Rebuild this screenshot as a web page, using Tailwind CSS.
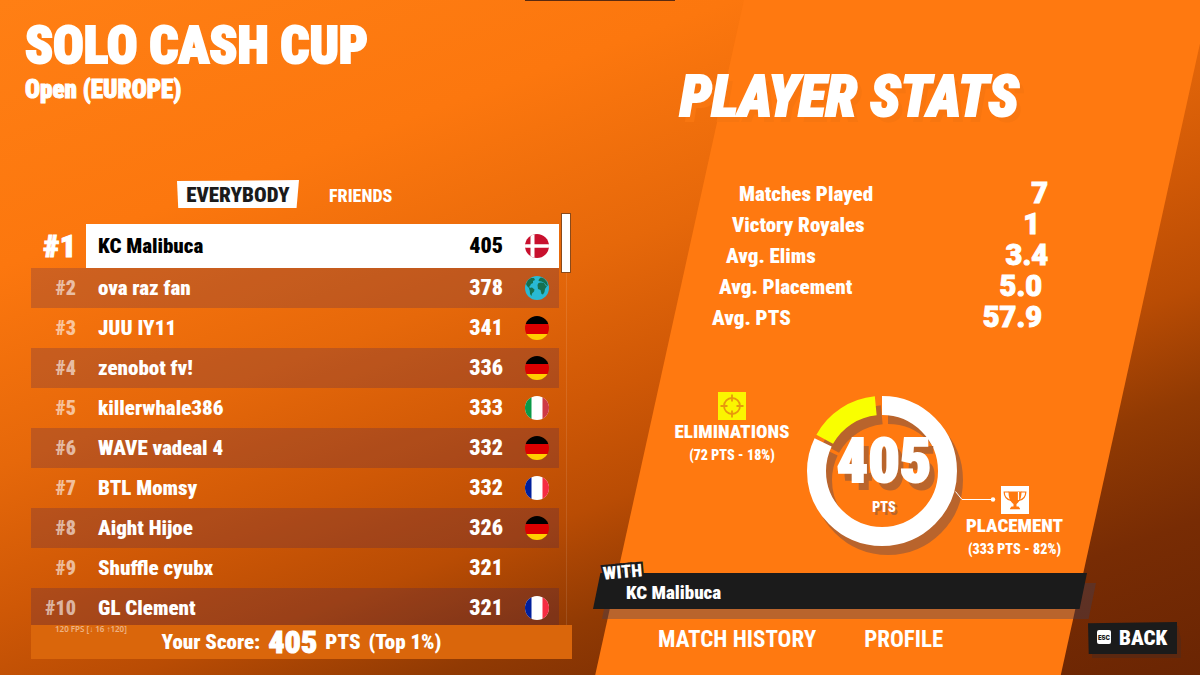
<!DOCTYPE html>
<html lang="en">
<head>
  <meta charset="UTF-8" />
  <meta name="viewport" content="width=device-width, initial-scale=1.0" />
  <title>Solo Cash Cup</title>
  <script src="https://cdn.jsdelivr.net/npm/@tailwindcss/browser@4"></script>
  <style>
    body { font-family: 'Roboto Condensed', Roboto, sans-serif; }
  </style>
</head>
<body class="relative flex h-screen overflow-hidden font-black text-white bg-[linear-gradient(160deg,#ff7f14_0%,#fc770e_24%,#e6680a_42%,#cf5806_55%,#b94c04_65%,#913a03_75%,#782c04_86%,#6a2503_100%)]">

  <!-- slanted stats panel -->
  <div class="absolute inset-0 bg-[#ff7910] [clip-path:polygon(62%_0,100.8%_0,88.4%_100%,49.6%_100%)]"></div>
  <div class="absolute top-0 left-[525px] h-px w-[150px] bg-[#5a2a10]"></div>

  <!-- leaderboard -->
  <main class="relative flex w-[48%] flex-col pt-5 pr-1 pb-4 pl-[31px]">
    <header class="-ml-[6px]">
      <h1 class="text-[51px] leading-[51px] [-webkit-text-stroke:2px_#fff]">SOLO CASH CUP</h1>
      <p class="mt-1 text-[25px] leading-[30px] [-webkit-text-stroke:1px_#fff]">Open (EUROPE)</p>
    </header>

    <nav class="mt-[75px] flex h-7 items-stretch pl-[146px]">
      <button class="w-[122px] bg-white pt-[2px] text-[21px] leading-6 text-[#1b1b1b] [clip-path:polygon(0_4%,100%_0,98%_100%,1%_100%)]">EVERYBODY</button>
      <button class="ml-[30px] pt-[2px] text-[18px] font-extrabold">FRIENDS</button>
    </nav>

    <div class="mt-[5px] flex min-h-0 flex-1 gap-[2px] overflow-hidden">
      <div class="flex-1 pt-[11px]">
        <table class="w-full table-fixed text-[21px] leading-6">
          <tbody id="rows"></tbody>
        </table>
      </div>
      <div class="w-[11px] bg-[linear-gradient(90deg,transparent_5px,#ffffff1a_5px,#ffffff1a_6px,transparent_6px)]">
        <div class="h-[60px] w-[10px] border border-[#8a4a1a] bg-white"></div>
      </div>
    </div>

    <footer class="relative flex h-[34px] shrink-0 items-center justify-center gap-2 bg-[#da660b] text-[21px] leading-[34px]">
      <span>Your Score:</span>
      <strong class="text-[32px] font-black [-webkit-text-stroke:1px_#fff]">405</strong>
      <span>PTS</span>
      <span>(Top 1%)</span>
      <small class="absolute -top-[2px] left-6 font-['Noto_Sans'] text-[8px] leading-[12px] font-semibold text-white/50">120 FPS [↓ 16 ↑120]</small>
    </footer>
  </main>

  <!-- player stats -->
  <section class="relative flex flex-1 flex-col pt-[67px]">
    <h2 class="ml-[104px] text-[57px] leading-[60px] italic [-webkit-text-stroke:2px_#fff] [text-shadow:5px_6px_0_#f87610]">PLAYER STATS</h2>

    <dl id="stats" class="mt-[52px] ml-[136px] w-[336px] text-[21px]"></dl>

    <div class="mt-[58px] ml-[99px] flex items-start">
      <div class="flex w-[114px] flex-col items-center">
        <svg class="h-7 w-7" viewBox="0 0 28 28" fill="none" stroke="#e8980c" stroke-width="1.8">
          <rect width="28" height="28" fill="#fbf500" stroke="none" />
          <circle cx="14" cy="14" r="8" />
          <path d="M14 2.500v7M14 18.500v7M2.500 14h7M18.500 14h7" />
        </svg>
        <h3 class="text-[19px] leading-6">ELIMINATIONS</h3>
        <p class="text-[14px] leading-[22px] whitespace-nowrap">(72 PTS - 18%)</p>
      </div>

      <div class="relative mt-1 ml-[18px] h-[150px] w-[150px]">
        <svg class="h-full w-full overflow-visible" viewBox="0 0 150 150" fill="none">
          <g transform="translate(6 9)" stroke="#363e61" stroke-opacity=".35" stroke-width="19">
            <circle cx="75" cy="75" r="65.5" pathLength="360" stroke-dasharray="296 64" transform="rotate(-90 75 75)" />
            <circle cx="75" cy="75" r="65.5" pathLength="360" stroke-dasharray="55.5 304.5" transform="rotate(209 75 75)" />
          </g>
          <g stroke-width="19">
            <circle cx="75" cy="75" r="65.5" pathLength="360" stroke="#fff" stroke-dasharray="296 64" transform="rotate(-90 75 75)" />
            <circle cx="75" cy="75" r="65.5" pathLength="360" stroke="#f9ff00" stroke-dasharray="55.5 304.5" transform="rotate(209 75 75)" />
          </g>
          <path d="M148.500 95.500l6.500 8h30" stroke="#fff" />
          <circle cx="186" cy="103.500" r="2.200" fill="#fff" />
        </svg>
        <div class="absolute inset-0 flex flex-col items-center pt-[35px] pl-1 [text-shadow:6px_8px_0_#b9652c]">
          <strong class="text-[62px] leading-[60px] font-black [-webkit-text-stroke:2px_#fff]">405</strong>
          <span class="mt-[6px] text-[14px] leading-5 [text-shadow:2px_3px_0_#b9652c]">PTS</span>
        </div>
      </div>

      <div class="mt-[94px] ml-[9px] flex w-[97px] flex-col items-center">
        <svg class="h-7 w-7" viewBox="0 0 28 28">
          <rect width="28" height="28" fill="#fff" />
          <path fill="#ff7910" d="M7.500 5.500h13c0 6-1.500 10-5 12.500v2.500h2l1.500 2v.800h-10v-.800l1.500-2h2V18c-3.500-2.500-5-6.500-5-12.500z" />
          <path fill="none" stroke="#ff7910" stroke-width="1.200" d="M8 6H3.200c0 4 2.500 7.500 7 8.500M20 6h4.800c0 4-2.500 7.500-7 8.500" />
          <path stroke="#fff" stroke-width="1.200" d="M17.500 6v8" />
        </svg>
        <h3 class="text-[19px] leading-6">PLACEMENT</h3>
        <p class="text-[14px] leading-[22px] whitespace-nowrap">(333 PTS - 82%)</p>
      </div>
    </div>

    <!-- teammates -->
    <div class="relative mt-[13px] ml-[17px] h-9 w-[494px]">
      <div class="absolute top-[10px] left-[9px] h-9 w-full bg-[#363e61]/35 [clip-path:polygon(1.5%_0,100%_0,98.5%_100%,0_100%)]"></div>
      <div class="absolute inset-0 bg-[#1b1b1b] [clip-path:polygon(1.5%_0,100%_0,98.5%_100%,0_100%)]"></div>
      <p class="relative pt-1 pl-[33px] text-[19px] leading-8">KC Malibuca</p>
      <span class="absolute -top-[11px] left-[10px] -rotate-5 text-[18px] leading-5 [-webkit-text-stroke:4px_#1b1b1b] [paint-order:stroke_fill]">WITH</span>
    </div>

    <div class="mt-[13px] flex h-8 items-center pl-[82px] text-[23px] font-bold">
      <button class="pt-[5px]">MATCH HISTORY</button>
      <button class="ml-12 pt-[5px]">PROFILE</button>
      <button class="mr-[23px] ml-auto flex h-8 w-[89px] items-center bg-[#1b1b1b] pt-[2px] pl-[9px] text-[21px] font-black shadow-[4px_4px_0_#5c2810] [clip-path:polygon(0_4%,100%_0,110%_120%,1%_120%)]">
        <span class="mb-1 flex h-[14px] w-[14px] items-center justify-center rounded-[2px] bg-white font-['Inter'] text-[6px] text-[#1b1b1b]">ESC</span>
        <span class="ml-2">BACK</span>
      </button>
    </div>
  </section>

  <script>
    const flags = {
      dk: '<path fill="#c8102e" d="M0 0h24v24H0z"/><path fill="#fff" d="M5.500 0h4v24h-4zM0 10.300h24v3.400H0z"/>',
      de: '<path d="M0 0h24v8H0z"/><path fill="#dd0000" d="M0 8h24v10H0z"/><path fill="#ffce00" d="M0 18h24v6H0z"/>',
      it: '<path fill="#fff" d="M0 0h24v24H0z"/><path fill="#0a9a48" d="M0 0h6.500v24H0z"/><path fill="#ce3a45" d="M17.500 0H24v24h-6.500z"/>',
      fr: '<path fill="#fff" d="M0 0h24v24H0z"/><path fill="#001f9c" d="M0 0h6.500v24H0z"/><path fill="#f52d42" d="M17.500 0H24v24h-6.500z"/>',
      world: '<path fill="#29b9d4" d="M0 0h24v24H0z"/><path fill="#17704f" d="M1 8l2-4 3-2 3 0 1 2-2 1 0 2-2 1-1 2-1 1 1 1-1 0-2-2zM4 12l3-.5 2.500 2-.5 2-2 2-.5 2.500-1.500-2-.2-3zM12.500 9l1-2 2.500-.5 3 .5 1.500 2.500 1.500.5-2 3-.5 3-1.500 2.500-1.500-.5-1-4-2.500-1zM13.500 5l.5-2 2-1.500 3 1 3 3.500 1 4-2-1-1.500-2-3-1.500z"/>'
    };

    const players = [
      ['KC Malibuca', 405, 'dk'],
      ['ova raz fan', 378, 'world'],
      ['JUU IY11', 341, 'de'],
      ['zenobot fv!', 336, 'de'],
      ['killerwhale386', 333, 'it'],
      ['WAVE vadeal 4', 332, 'de'],
      ['BTL Momsy', 332, 'fr'],
      ['Aight Hijoe', 326, 'de'],
      ['Shuffle cyubx', 321, ''],
      ['GL Clement', 321, 'fr']
    ];

    document.getElementById('rows').innerHTML = players.map(([name, pts, flag], i) => {
      const first = i === 0;
      const cell = first ? 'bg-white text-black' : '';
      return `
        <tr class="${first ? 'h-11' : i % 2 ? 'h-10 bg-[#24146b]/20' : 'h-10'}">
          <td class="w-[55px] pr-[10px] text-right ${first ? 'text-[32px] [-webkit-text-stroke:1px_#fff]' : 'text-[20px] text-white/60'}">#${i + 1}</td>
          <td class="pl-3 ${cell}">${name}</td>
          <td class="w-[80px] text-right text-[22px] ${cell}">${pts}</td>
          <td class="w-[56px] pl-[22px] ${cell}">${flag ? `<svg class="h-6 w-6 rounded-full" viewBox="0 0 24 24">${flags[flag]}</svg>` : ''}</td>
        </tr>`;
    }).join('');

    // each row steps left to follow the slant of the panel
    const stats = [
      ['Matches Played', '7', 'pl-[27px]'],
      ['Victory Royales', '1', 'pl-[20px] pr-[8px]'],
      ['Avg. Elims', '3.4', 'pl-[14px]'],
      ['Avg. Placement', '5.0', 'pl-[7px] pr-[6px]'],
      ['Avg. PTS', '57.9', 'pr-[6px]']
    ];

    document.getElementById('stats').innerHTML = stats.map(([label, value, step]) => `
      <div class="flex h-[31px] items-center justify-between ${step}">
        <dt>${label}</dt>
        <dd class="pb-[3px] font-['Roboto'] text-[29px] leading-[27px] [-webkit-text-stroke:1px_#fff]">${value}</dd>
      </div>`).join('');
  </script>
</body>
</html>
